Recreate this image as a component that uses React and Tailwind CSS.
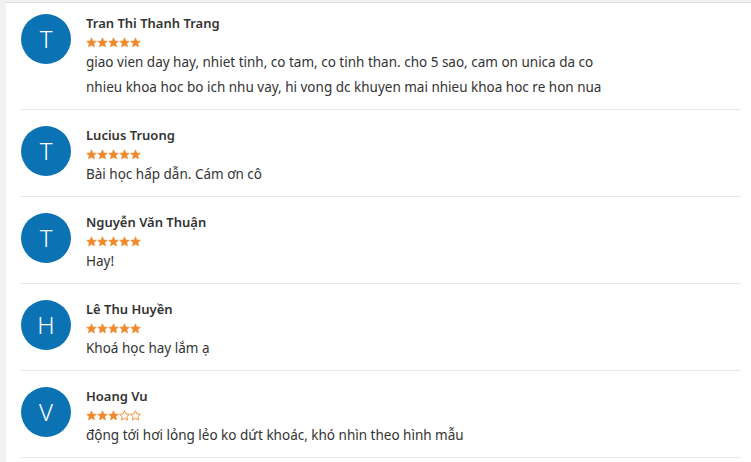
import React from 'react';

const reviews = [
  {
    name: 'Tran Thi Thanh Trang',
    initial: 'T',
    rating: 5,
    text: 'giao vien day hay, nhiet tinh, co tam, co tinh than. cho 5 sao, cam on unica da co nhieu khoa hoc bo ich nhu vay, hi vong dc khuyen mai nhieu khoa hoc re hon nua',
  },
  { name: 'Lucius Truong', initial: 'T', rating: 5, text: 'Bài học hấp dẫn. Cám ơn cô' },
  { name: 'Nguyễn Văn Thuận', initial: 'T', rating: 5, text: 'Hay!' },
  { name: 'Lê Thu Huyền', initial: 'H', rating: 5, text: 'Khoá học hay lắm ạ' },
  { name: 'Hoang Vu', initial: 'V', rating: 3, text: 'động tới hơi lỏng lẻo ko dứt khoác, khó nhìn theo hình mẫu' },
];

const Star = ({ filled }) => (
  <svg width="11" height="11" viewBox="0 0 24 24" className="shrink-0">
    <path
      d="M12 1.5l3.2 7 7.6.8-5.7 5.1 1.6 7.5L12 18l-6.7 3.9 1.6-7.5L1.2 9.3l7.6-.8z"
      fill={filled ? '#f0892b' : 'none'}
      stroke="#f0892b"
      strokeWidth={filled ? 1 : 2}
      strokeLinejoin="round"
    />
  </svg>
);

const ReviewItem = ({ review, first }) => (
  <div className={`flex border-b border-[#e8e8e8] pb-[9px] ${first ? 'pt-[10px]' : 'pt-[15px]'}`}>
    <div className="w-[50px] h-[50px] rounded-full bg-[#0b72b3] text-white flex items-center justify-center text-[24px] font-light shrink-0 mt-[1px]">
      {review.initial}
    </div>
    <div className="ml-[15px] flex-1">
      <div className="text-[13px] leading-[20px] font-semibold text-[#333]">{review.name}</div>
      <div className="flex items-center h-[18px]">
        {[0, 1, 2, 3, 4].map((i) => (
          <Star key={i} filled={i < review.rating} />
        ))}
      </div>
      <div className="text-[13.5px] leading-[25px] text-[#333] max-w-[520px] -mt-[1px]">{review.text}</div>
    </div>
  </div>
);

export default function App() {
  return (
    <div
      className="w-[751px] h-[462px] bg-[#f1f1f1] pl-[6px] pt-[2px] overflow-hidden"
      style={{ fontFamily: '"Noto Sans", "Open Sans", sans-serif' }}
    >
      <div className="bg-white h-full border-t border-[#dedede] pl-[15px] pr-[10px]">
        {reviews.map((r, i) => (
          <ReviewItem key={i} review={r} first={i === 0} />
        ))}
      </div>
    </div>
  );
}
